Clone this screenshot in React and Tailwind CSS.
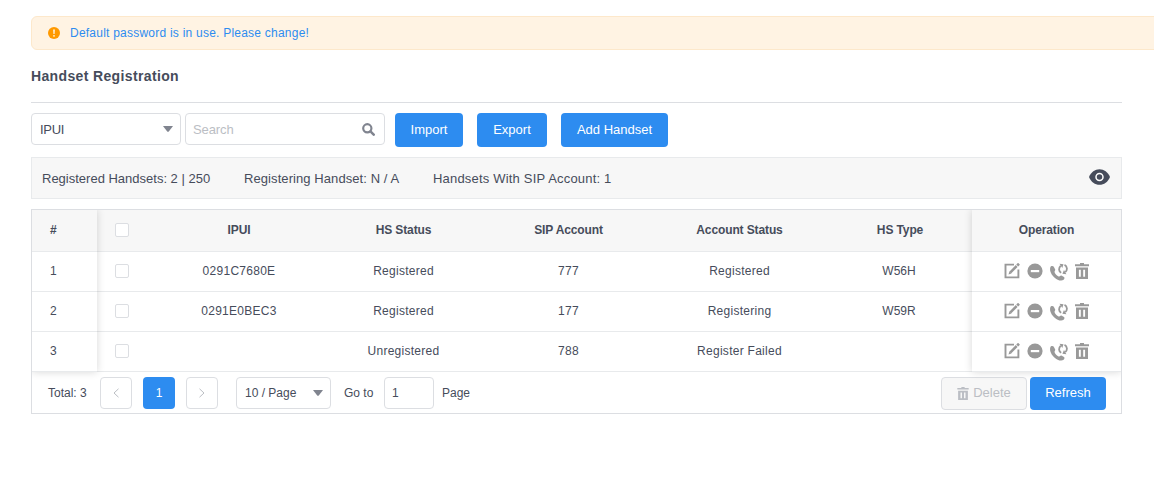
import React from "react";

const rows = [
  { id: 1, ipui: "0291C7680E", hs: "Registered", sip: "777", account: "Registered", type: "W56H" },
  { id: 2, ipui: "0291E0BEC3", hs: "Registered", sip: "177", account: "Registering", type: "W59R" },
  { id: 3, ipui: "", hs: "Unregistered", sip: "788", account: "Register Failed", type: "" },
];

const headRow = "h-[42px] border-b border-[#e8eaec] bg-[#f7f7f7] font-bold text-xs tracking-[-0.12px] items-center pb-px";
const bodyRow = "h-10 border-b border-[#e8eaec] bg-white items-center pb-px tracking-[0.27px]";
const columns = "grid grid-cols-[60px_164px_165px_165px_177px_144px] text-center";

function Caret() {
  return (
    <svg width="10" height="6" viewBox="0 0 10 6" className="shrink-0 fill-[#80848f]">
      <path d="M0 0h10L5.8 5.4q-.8.9-1.6 0z" />
    </svg>
  );
}

function TrashIcon({ className }) {
  return (
    <svg viewBox="0 0 14 16" className={className} fill="currentColor">
      <path d="M5 0h4v1.2h5v2H0v-2h5z" />
      <path fillRule="evenodd" d="M1 4.5h12V16H1zM3.9 6.8v7h1.9v-7zM8.2 6.8v7h1.9v-7z" />
    </svg>
  );
}

function EditIcon() {
  return (
    <svg width="16" height="16" viewBox="0 0 16 16" fill="none" stroke="currentColor">
      <path strokeWidth="1.9" d="M10 1.6H1.5v12.8h12.9V6.5" />
      <path strokeWidth="2.5" d="M6.2 9.6 12.7 3" />
      <path strokeWidth="2.7" d="m13.2 2.5 1.8-1.8" />
      <path fill="currentColor" stroke="none" d="m5.4 8.5 2 2-2.9.9z" />
    </svg>
  );
}

function MinusIcon() {
  return (
    <svg width="16" height="16" viewBox="0 0 16 16">
      <circle cx="8" cy="8" r="7.6" fill="currentColor" />
      <path d="M3.8 7h8.4v2.2H3.8z" fill="#fff" />
    </svg>
  );
}

function CallIcon() {
  return (
    <svg width="18" height="18" viewBox="0 0 18 18" fill="currentColor">
      <path d="M1 3.3C1.8 2.7 3.2 2.7 3.8 3.7L5.2 6.5C5.6 7.4 4.3 8.4 4.6 9.2C5 10.8 7 12.9 8.6 13.5C9.6 13.8 10.4 12.2 11.4 12.5L14 14C14.9 14.7 14.4 16 13.6 16.8C12.2 18 9.7 17.8 7.7 16.7C4 14.8.9 11.2.2 7.7C-.1 6 .1 4.1 1 3.3z" />
      <path fill="none" stroke="currentColor" strokeWidth="1.8" d="M11.2 9.8C8.6 8.5 8.4 4.9 10.8 2.8M14.5 1.9C17.5 3.3 17.6 7.4 15.3 9.1" />
      <path d="m9.5.8 4 .4-1.2 3.9zM16.4 11.3l-4-.6 1.6-3.7z" />
    </svg>
  );
}

function Checkbox() {
  return <span className="ml-[18px] block size-[14px] rounded-[2px] border border-[#dcdee2] bg-white" />;
}

function Button({ children, className }) {
  return <button className={"rounded-[4px] bg-[#2d8cf0] text-[13px] text-white " + className}>{children}</button>;
}

export default function App() {
  return (
    <div className="h-[503px] overflow-hidden bg-white pl-[31px] pt-4 font-['Liberation_Sans',Arial,sans-serif] text-[13px] text-[#464c5b]">
      <div className="flex h-[34px] w-[1140px] items-center rounded-[6px] border border-[#fde8cb] bg-[#fff3e3] pl-4 text-[#2d8cf0]">
        <svg width="12" height="12" viewBox="0 0 12 12" className="mr-[10px]">
          <circle cx="6" cy="6" r="6" fill="#ff9900" />
          <path d="M5.2 2.5h1.6l-.3 4.5h-1z" fill="#fff" />
          <circle cx="6" cy="8.9" r=".8" fill="#fff" />
        </svg>
        <span className="text-xs tracking-[0.23px]">Default password is in use. Please change!</span>
      </div>

      <div className="w-[1091px]">
        <h1 className="flex h-[53px] items-center border-b border-[#dcdee2] text-[14px] font-bold tracking-[0.36px]">
          Handset Registration
        </h1>

        <div className="flex pt-[10px]">
          <div className="flex h-8 w-[150px] items-center justify-between rounded-[4px] border border-[#dcdee2] pl-2 pr-[7px]">
            <span className="pt-px tracking-[-0.3px]">IPUI</span>
            <Caret />
          </div>
          <div className="ml-1 flex h-8 w-[200px] items-center justify-between rounded-[4px] border border-[#dcdee2] pl-[7px] pr-[9px] text-[#bbbec4]">
            <span className="pt-px tracking-[-0.1px]">Search</span>
            <svg width="13" height="13" viewBox="0 0 12 12" fill="none" stroke="#80848f">
              <circle cx="4.9" cy="4.9" r="3.8" strokeWidth="2" />
              <path d="m7.8 7.8 3 3" strokeWidth="2.3" strokeLinecap="round" />
            </svg>
          </div>
          <Button className="ml-[10px] h-[34px] w-[68px]">Import</Button>
          <Button className="ml-[14px] h-[34px] w-[70px]">Export</Button>
          <Button className="ml-[14px] h-[34px] w-[107px]">Add Handset</Button>
        </div>

        <div className="mt-[10px] flex h-[42px] items-center border border-[#e8eaec] bg-[#f7f7f7] pl-[10px] pr-[11px]">
          <span className="w-[202px] pt-px">Registered Handsets: 2 | 250</span>
          <span className="w-[189px] pt-px tracking-[0.08px]">Registering Handset: N / A</span>
          <span className="pt-px tracking-[0.19px]">Handsets With SIP Account: 1</span>
          <svg width="21" height="16" viewBox="0 0 21 16" className="mb-[2px] ml-auto">
            <path d="M0 8C2 3 6 .2 10.5.2S19 3 21 8c-2 5-6 7.8-10.5 7.8S2 13 0 8z" fill="#464c5b" />
            <circle cx="10.5" cy="8" r="3.5" fill="none" stroke="#fff" strokeWidth="1.5" />
          </svg>
        </div>

        <div className="mt-[10px] overflow-hidden border border-[#dcdee2] text-xs">
          <div className="flex">
            <div className="relative z-10 w-[65px] shadow-[0_0_8px_rgba(0,0,0,0.16)]">
              <div className={"flex pl-[18px] " + headRow}>#</div>
              {rows.map((r) => (
                <div key={r.id} className={"flex pl-[18px] " + bodyRow}>{r.id}</div>
              ))}
            </div>
            <div className="w-[875px]">
              <div className={columns + " " + headRow}>
                <Checkbox />
                <span>IPUI</span>
                <span>HS Status</span>
                <span>SIP Account</span>
                <span>Account Status</span>
                <span>HS Type</span>
              </div>
              {rows.map((r) => (
                <div key={r.id} className={columns + " " + bodyRow}>
                  <Checkbox />
                  <span>{r.ipui}</span>
                  <span>{r.hs}</span>
                  <span>{r.sip}</span>
                  <span>{r.account}</span>
                  <span className="pr-[2px] tracking-normal">{r.type}</span>
                </div>
              ))}
            </div>
            <div className="relative z-10 w-[149px] shadow-[0_0_8px_rgba(0,0,0,0.16)]">
              <div className={"flex justify-center " + headRow}>Operation</div>
              {rows.map((r) => (
                <div key={r.id} className={"flex pl-8 text-[#999] " + bodyRow}>
                  <EditIcon />
                  <span className="ml-[7px]"><MinusIcon /></span>
                  <span className="ml-[7px] pt-px"><CallIcon /></span>
                  <TrashIcon className="ml-[7px] h-4 w-[14px]" />
                </div>
              ))}
            </div>
          </div>

          <div className="flex h-[41px] items-center pl-4 pr-[15px]">
            <span className="w-[52px]">Total: 3</span>
            <span className="flex h-8 w-8 items-center justify-center rounded-[4px] border border-[#dcdee2] text-[#bbbec4]">
              <svg width="6" height="10" viewBox="0 0 6 10" fill="none" stroke="currentColor"><path d="M5.5.8 1 5l4.5 4.2" /></svg>
            </span>
            <span className="ml-[11px] flex h-8 w-8 items-center justify-center rounded-[4px] bg-[#2d8cf0] text-white">1</span>
            <span className="ml-[11px] flex h-8 w-8 items-center justify-center rounded-[4px] border border-[#dcdee2] text-[#bbbec4]">
              <svg width="6" height="10" viewBox="0 0 6 10" fill="none" stroke="currentColor"><path d="M.5.8 5 5 .5 9.2" /></svg>
            </span>
            <span className="ml-[18px] flex h-8 w-[95px] items-center justify-between rounded-[4px] border border-[#dcdee2] pl-2 pr-[7px]">
              10 / Page
              <Caret />
            </span>
            <span className="ml-[13px] w-[40px]">Go to</span>
            <span className="flex h-8 w-[50px] items-center rounded-[4px] border border-[#dcdee2] pl-[7px]">1</span>
            <span className="ml-2">Page</span>
            <button className="ml-auto mt-px flex h-[33px] w-[86px] items-center justify-center gap-1 rounded-[4px] border border-[#dcdee2] bg-[#f7f7f7] text-[13px] text-[#bbbec4]">
              <TrashIcon className="h-[13px] w-[12px]" />
              Delete
            </button>
            <Button className="ml-[3px] mt-px h-[33px] w-[76px]">Refresh</Button>
          </div>
        </div>
      </div>
    </div>
  );
}
